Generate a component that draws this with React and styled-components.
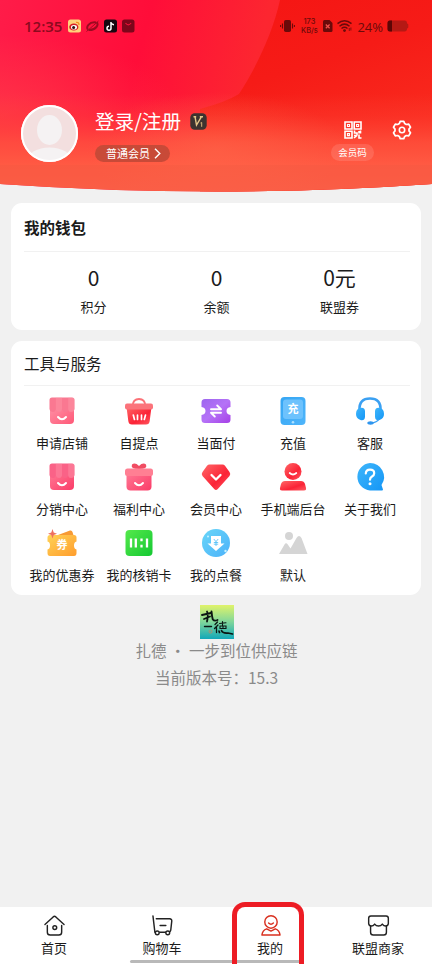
import React from "react";
import styled, { createGlobalStyle } from "styled-components";

const GlobalStyle = createGlobalStyle`
  * {
    box-sizing: border-box;
  }
  body {
    margin: 0;
    background-color: #f1f1f1;
    font-family: "Noto Sans CJK SC", sans-serif;
    color: #1b1b1b;
  }
`;

function HeaderArt() {
  return (
    <Art viewBox="0 0 432 192" preserveAspectRatio="none">
      <defs>
        <linearGradient id="base" x1="0" y1="0" x2="1" y2="0.12">
          <stop offset="0" stopColor="#ff1c49" />
          <stop offset="0.35" stopColor="#ff0d39" />
          <stop offset="0.62" stopColor="#fc2630" />
          <stop offset="1" stopColor="#f8221a" />
        </linearGradient>
        <linearGradient id="right" x1="0" y1="0" x2="0.4" y2="1">
          <stop offset="0" stopColor="#f51513" />
          <stop offset="0.45" stopColor="#f61b17" />
          <stop offset="1" stopColor="#fa2f20" />
        </linearGradient>
        <linearGradient id="fade" x1="0" y1="0" x2="0" y2="1">
          <stop offset="0.49" stopColor="#ff4b3c" stopOpacity="0" />
          <stop offset="0.6" stopColor="#ff4336" stopOpacity="0.3" />
          <stop offset="0.74" stopColor="#ff523e" stopOpacity="0.8" />
          <stop offset="0.86" stopColor="#ff5a43" />
          <stop offset="1" stopColor="#ff6048" />
        </linearGradient>
        <radialGradient id="side" cx="0" cy="0.6" r="0.42">
          <stop offset="0" stopColor="#ff4a48" stopOpacity="0.55" />
          <stop offset="1" stopColor="#ff4a48" stopOpacity="0" />
        </radialGradient>
        <radialGradient id="glow" cx="0.5" cy="0.78" r="0.3">
          <stop offset="0" stopColor="#ff6a4c" stopOpacity="0.5" />
          <stop offset="1" stopColor="#ff6a4c" stopOpacity="0" />
        </radialGradient>
        <clipPath id="curve">
          <path d="M0 0H432V184Q324 191.500 216 191.500Q108 191.500 0 184Z" />
        </clipPath>
      </defs>
      <g clipPath="url(#curve)">
        <path d="M0 0H432V192H0Z" fill="url(#base)" />
        <path
          d="M280 0C273 32 257 66 239 94Q226 102 200 109V192H432V0Z"
          fill="url(#right)"
        />
        <path d="M0 0H432V192H0Z" fill="url(#side)" />
        <path d="M0 0H432V192H0Z" fill="url(#fade)" />
        <path d="M0 0H432V192H0Z" fill="url(#glow)" />
        <path d="M0 165H432V192H0Z" fill="#e8573e" opacity="0.22" />
      </g>
    </Art>
  );
}

function StatusIcons() {
  return (
    <svg width="67" height="14" viewBox="0 0 67 14">
      <rect x="0" y="0.500" width="13" height="13" rx="2.500" fill="#ffd27a" />
      <ellipse cx="5.800" cy="8" rx="4.600" ry="3.600" fill="#d81f26" />
      <ellipse cx="6" cy="8.200" rx="3" ry="2.300" fill="#fff" />
      <circle cx="5.600" cy="8.400" r="1.500" fill="#2b1210" />
      <path
        d="M8 3.400q3-.6 3 2.600"
        fill="none"
        stroke="#f58a1f"
        strokeWidth="1.200"
      />
      <path
        d="M20 10.500C17.500 8.500 21 2.500 28 3.500M28.500 3.500C31.500 5 28 11.500 20.500 11"
        fill="none"
        stroke="#9a0a20"
        strokeWidth="2"
      />
      <path d="M18.500 12.500L30.500 2" stroke="#9a0a20" strokeWidth="0.900" />
      <rect x="36" y="0.500" width="13" height="13" rx="2.500" fill="#170710" />
      <path
        d="M43 3v6.200a2 2 0 1 1-2-2M43 3q.4 2.500 3 2.700"
        fill="none"
        stroke="#fff"
        strokeWidth="1.500"
      />
      <rect x="54" y="0.500" width="12.500" height="13" rx="2.500" fill="#7d061b" />
      <path
        d="M57.500 4q2.800 3.600 5.600 0"
        fill="none"
        stroke="#ef1238"
        strokeWidth="1.200"
      />
    </svg>
  );
}

function VibrateIcon() {
  return (
    <svg width="15" height="14" viewBox="0 0 15 14">
      <rect x="4" y="1" width="7" height="12" rx="1.800" fill="#6b0a0a" />
      <path
        d="M2.500 4.500v5M12.500 4.500v5M.6 6v2M14.400 6v2"
        stroke="#6b0a0a"
        strokeWidth="1.100"
      />
    </svg>
  );
}

function SignalIcons() {
  return (
    <svg width="30" height="14" viewBox="0 0 30 14">
      <path
        d="M2.500 1H7.500L10.500 4V11.500Q10.500 13 9 13H2.500Q1 13 1 11.500V2.500Q1 1 2.500 1Z"
        fill="#6b0a0a"
      />
      <path d="M3.800 5.500l3.800 3.800M7.600 5.500L3.800 9.300" stroke="#f0504a" strokeWidth="1.300" />
      <g fill="none" stroke="#6b0a0a" strokeWidth="1.500">
        <path d="M15.500 4.700Q22.500-1 29.500 4.700" />
        <path d="M17.500 7.200Q22.500 3 27.500 7.200" />
        <path d="M19.500 9.500Q22.500 7.200 25.500 9.500" />
      </g>
      <circle cx="22.500" cy="11.600" r="1.400" fill="#6b0a0a" />
      <path d="M27.300 9v3M28.900 8.500v3" stroke="#6b0a0a" strokeWidth="0.800" />
    </svg>
  );
}

function BatteryIcon() {
  return (
    <svg width="22" height="12" viewBox="0 0 22 12">
      <path
        d="M3 .5H17.500Q20 .5 20 3.200L21.300 4.500V7.500L20 8.800Q20 11.500 17.500 11.500H3Q.5 11.500 .5 9V3Q.5 .5 3 .5Z"
        fill="#b51914"
      />
      <path d="M3 .5H5V11.500H3Q.5 11.500 .5 9V3Q.5 .5 3 .5Z" fill="#5c0606" />
    </svg>
  );
}

function AvatarIcon() {
  return (
    <svg width="57" height="57" viewBox="0 0 57 57">
      <defs>
        <clipPath id="face">
          <circle cx="28.500" cy="28.500" r="27" />
        </clipPath>
      </defs>
      <circle cx="28.500" cy="28.500" r="28.500" fill="#fff" />
      <circle cx="28.500" cy="28.500" r="27" fill="#f3dfdf" />
      <g clipPath="url(#face)" fill="#f5f2f3">
        <ellipse cx="28.500" cy="25" rx="12.500" ry="15" />
        <ellipse cx="28.500" cy="55" rx="22" ry="12.500" />
      </g>
      <circle
        cx="28.500"
        cy="28.500"
        r="27.500"
        fill="none"
        stroke="#fff"
        strokeWidth="2"
      />
    </svg>
  );
}

function LevelBadge() {
  return (
    <svg width="17" height="17" viewBox="0 0 17 17">
      <rect x="0.300" y="0.300" width="16.400" height="16.400" rx="4.500" fill="#3c3330" />
      <path
        d="M3.500 3.700H6.200M5 3.700L6.500 12L11.500 3.700M9.800 3.700H13"
        fill="none"
        stroke="#e4c689"
        strokeWidth="1.400"
      />
      <path d="M10.500 10L11.700 9.500V13.800" fill="none" stroke="#d9b87c" />
    </svg>
  );
}

function QrIcon() {
  return (
    <svg width="18" height="18" viewBox="0 0 18 18">
      <g fill="none" stroke="#fff" strokeWidth="1.600">
        <path d="M1 1H8V8H1ZM10.200 1H17V8H10.200ZM1 10.200H8V17H1Z" />
        <path d="M3.500 3.500h2v2h-2zM12.600 3.500h2v2h-2zM3.500 12.600h2v2h-2z" strokeWidth="1.100" />
        <path d="M10.500 9.500V12H13V14.500M16.500 9.500V12.500M15 10V12.500M10 17L13 14.500M15 13.500V17H17.500M10 14.500H12" />
      </g>
    </svg>
  );
}

function GearIcon() {
  return (
    <svg width="20" height="20" viewBox="0 0 20 20" fill="none" stroke="#fff">
      <path
        d="M8.200 1.400H11.800L12.700 3.600L14.300 4.500L16.700 4.100L18.500 7.200L17 9.100V10.900L18.500 12.800L16.700 15.900L14.300 15.500L12.700 16.400L11.800 18.600H8.200L7.300 16.400L5.700 15.500L3.300 15.900L1.500 12.800L3 10.900V9.100L1.500 7.200L3.300 4.100L5.700 4.500L7.300 3.600Z"
        strokeWidth="1.700"
        strokeLinejoin="round"
      />
      <circle cx="10" cy="10" r="2.700" strokeWidth="1.600" />
    </svg>
  );
}

function ToolDefs() {
  return (
    <HiddenSvg>
      <defs>
        <linearGradient id="pink" x1="0" y1="0" x2="1" y2="1">
          <stop offset="0" stopColor="#ff93a8" />
          <stop offset="1" stopColor="#ff5877" />
        </linearGradient>
        <linearGradient id="pinkDeep" x1="0" y1="0" x2="1" y2="1">
          <stop offset="0" stopColor="#ff7b96" />
          <stop offset="1" stopColor="#fb3c68" />
        </linearGradient>
        <linearGradient id="red" x1="0" y1="0" x2="1" y2="1">
          <stop offset="0" stopColor="#ff6868" />
          <stop offset="0.600" stopColor="#fb2336" />
          <stop offset="1" stopColor="#ff5b62" />
        </linearGradient>
        <linearGradient id="purple" x1="0" y1="0" x2="1" y2="1">
          <stop offset="0" stopColor="#9c66ee" />
          <stop offset="0.500" stopColor="#b572f7" />
          <stop offset="1" stopColor="#a63fe6" />
        </linearGradient>
        <linearGradient id="blue" x1="0" y1="0" x2="1" y2="1">
          <stop offset="0" stopColor="#35a6f3" />
          <stop offset="1" stopColor="#4fb5fb" />
        </linearGradient>
        <linearGradient id="azure" x1="0" y1="0" x2="1" y2="1">
          <stop offset="0" stopColor="#3fb6fb" />
          <stop offset="1" stopColor="#1496f6" />
        </linearGradient>
        <linearGradient id="sky" x1="0" y1="0" x2="1" y2="1">
          <stop offset="0" stopColor="#68d6f8" />
          <stop offset="1" stopColor="#4cb2fa" />
        </linearGradient>
        <linearGradient id="gold" x1="0" y1="0" x2="1" y2="1">
          <stop offset="0" stopColor="#ffd256" />
          <stop offset="1" stopColor="#ff9d2d" />
        </linearGradient>
        <linearGradient id="green" x1="0" y1="0" x2="1" y2="1">
          <stop offset="0" stopColor="#55e94c" />
          <stop offset="1" stopColor="#14c832" />
        </linearGradient>
      </defs>
    </HiddenSvg>
  );
}

function Smile({ y = 20 }) {
  return (
    <path
      d={`M10 ${y}Q14 ${y + 4.4} 18 ${y}`}
      fill="none"
      stroke="#fff"
      strokeWidth="2"
      strokeLinecap="round"
    />
  );
}

function ShopIcon({ deep }) {
  return (
    <ToolSvg viewBox="0 0 28 28">
      <rect
        x="2"
        y="8"
        width="24"
        height="19"
        rx="4"
        fill={deep ? "url(#pinkDeep)" : "url(#pink)"}
      />
      <path
        d="M4 .5H24Q26.500 .5 26.500 3V12Q26 15 23 15Q20.500 15 20.200 12.500Q19.500 15 17 15Q14.500 15 14 12.500Q13.500 15 11 15Q8.500 15 7.800 12.500Q7.500 15 5 15Q2 15 1.500 12V3Q1.500 .5 4 .5Z"
        fill={deep ? "#fa6287" : "#fa7891"}
      />
      <path
        d="M7.800 .5H14V12.500Q13.500 15 11 15Q8.500 15 7.800 12.500ZM20.200 .5H24Q26.500 .5 26.500 3V12Q26 15 23 15Q20.500 15 20.200 12.500Z"
        fill="#ffa0b0"
        opacity="0.350"
      />
      <Smile />
    </ToolSvg>
  );
}

function BasketIcon() {
  return (
    <ToolSvg viewBox="0 0 28 28">
      <path
        d="M7.500 9Q8 2 14 2Q20 2 20.500 9"
        fill="none"
        stroke="#fb7177"
        strokeWidth="1.800"
      />
      <path d="M1.500 10H26.500L24.700 24Q24.300 27.500 21 27.500H7Q3.700 27.500 3.300 24Z" fill="url(#red)" />
      <rect x="0" y="6.500" width="28" height="6" rx="2" fill="#fb737b" />
      <path
        d="M8.300 18L9.500 22.500M12.500 18V22.500M16.500 18V22.500M20.500 18L19.300 22.500"
        stroke="#fff"
        strokeWidth="1.700"
        strokeLinecap="round"
      />
    </ToolSvg>
  );
}

function TransferIcon() {
  return (
    <ToolSvg viewBox="0 0 28 28">
      <path
        d="M3 2H25Q28.500 2 28.500 5.500V10Q24.500 10.500 24.500 14Q24.500 17.500 28.500 18V22.500Q28.500 26 25 26H3Q-.5 26 -.5 22.500V18Q3.500 17.500 3.500 14Q3.500 10.500 -.5 10V5.500Q-.5 2 3 2Z"
        fill="url(#purple)"
      />
      <path
        d="M9 12.200H19L15.200 8.500M19 15.800H9L12.800 19.500"
        fill="none"
        stroke="#fff"
        strokeWidth="1.900"
        strokeLinecap="round"
        strokeLinejoin="round"
      />
    </ToolSvg>
  );
}

function RechargeIcon() {
  return (
    <ToolSvg viewBox="0 0 28 28">
      <rect x="1.500" y="0" width="25" height="28" rx="4" fill="url(#blue)" />
      <rect x="4" y="2.500" width="20" height="19.500" rx="3" fill="#6dc2fd" />
      <circle cx="14" cy="25.200" r="1.300" fill="#aee0ff" />
      <text x="14" y="16.300" fontSize="11" fontWeight="700" fill="#fff" textAnchor="middle">
        充
      </text>
    </ToolSvg>
  );
}

function HeadsetIcon() {
  return (
    <ToolSvg viewBox="0 0 28 28">
      <path
        d="M3.500 13Q3 1.500 14 1.500Q25 1.500 24.500 13"
        fill="none"
        stroke="#3ba0f2"
        strokeWidth="2.600"
      />
      <path d="M4 11Q8.500 10 9 14V20Q8.500 24 4.500 23Q0 21.500 0 17Q0 12 4 11Z" fill="url(#azure)" />
      <path d="M24 11Q19.500 10 19 14V20Q19.500 24 23.500 23Q28 21.500 28 17Q28 12 24 11Z" fill="url(#azure)" />
      <path d="M23 22Q21 25.500 15 26" fill="none" stroke="#38a0f4" strokeWidth="1.500" />
      <ellipse cx="14.500" cy="26" rx="3.200" ry="1.700" fill="#2e95ee" />
    </ToolSvg>
  );
}

function GiftIcon() {
  return (
    <ToolSvg viewBox="0 0 28 28">
      <path d="M14 6Q5 6 7 1.500Q10-1 14 3Q18-1 21 1.500Q23 6 14 6Z" fill="#f04c62" />
      <rect x="1.500" y="8" width="25" height="19.500" rx="4" fill="url(#pinkDeep)" />
      <rect x="0" y="5.500" width="28" height="7.500" rx="2.500" fill="#ff7f93" />
      <Smile />
    </ToolSvg>
  );
}

function DiamondIcon() {
  return (
    <ToolSvg viewBox="0 0 28 28">
      <path
        d="M7.500 1.500H20.500Q22 1.500 23 2.700L27.500 9Q29 11 27.500 13L15.800 26Q14 28 12.200 26L.5 13Q-1 11 .5 9L5 2.700Q6 1.500 7.500 1.500Z"
        fill="url(#red)"
      />
      <path
        d="M9.500 12L14 16.500L18.500 12"
        fill="none"
        stroke="#fff"
        strokeWidth="2.300"
        strokeLinecap="round"
        strokeLinejoin="round"
      />
    </ToolSvg>
  );
}

function AdminIcon() {
  return (
    <ToolSvg viewBox="0 0 28 28">
      <circle cx="14" cy="8.500" r="8.500" fill="url(#red)" />
      <path
        d="M10.700 10Q14 13 17.300 10"
        fill="none"
        stroke="#fff"
        strokeWidth="1.800"
        strokeLinecap="round"
      />
      <path
        d="M6 18H22Q25 18 26 21L27 25Q27.500 27.500 25 27.500H3Q.5 27.500 1 25L2 21Q3 18 6 18Z"
        fill="url(#red)"
      />
    </ToolSvg>
  );
}

function AboutIcon() {
  return (
    <ToolSvg viewBox="0 0 28 28">
      <path
        d="M14 0A14 14 0 0 1 25.500 22L27 26.500Q27 27.500 26 27.500H14A13.800 13.800 0 0 1 14 0Z"
        fill="url(#azure)"
      />
      <path
        d="M9.800 10.500Q10 6.700 14 6.700Q18.200 6.700 18.200 10.200Q18.200 12.300 16 13.500Q14 14.700 14 16.700"
        fill="none"
        stroke="#fff"
        strokeWidth="2.200"
        strokeLinecap="round"
      />
      <circle cx="14" cy="20.800" r="1.500" fill="#fff" />
    </ToolSvg>
  );
}

function CouponIcon() {
  return (
    <ToolSvg viewBox="0 0 28 28">
      <path d="M10 6L22 1.500Q24 1 24.500 3L26 8H8Z" fill="#f79a34" />
      <path
        d="M2 6H26Q28.500 6 28.500 8.500V12.500Q26 13 26 16.500Q26 20 28.500 20.500V24Q28.500 27 26 27H2Q-.5 27 -.5 24V20.500Q2 20 2 16.500Q2 13 -.5 12.500V8.500Q-.5 6 2 6Z"
        fill="url(#gold)"
      />
      <path d="M4.500 0L5.700 3.500L9 4.700L5.700 6L4.500 9.500L3.300 6L0 4.700L3.300 3.500Z" fill="#ee705e" />
      <text x="14" y="20.300" fontSize="11" fontWeight="700" fill="#fff" textAnchor="middle">
        券
      </text>
    </ToolSvg>
  );
}

function CardIcon() {
  return (
    <ToolSvg viewBox="0 0 28 28">
      <rect x="0.500" y="1" width="27" height="26" rx="4" fill="url(#green)" />
      <path
        d="M6 9.500V18.500M10.800 9.500V18.500M16.500 9.500V12.300M16.500 15.700V18.500M22 9.500V18.500"
        stroke="#fff"
        strokeWidth="2.300"
      />
    </ToolSvg>
  );
}

function OrderIcon() {
  return (
    <ToolSvg viewBox="0 0 28 28">
      <circle cx="14" cy="14" r="14" fill="url(#sky)" />
      <path d="M9 7H19V14.500H22.500L14 22L5.500 14.500H9Z" fill="#fff" />
      <path
        d="M11.800 10L14 12.700L16.200 10M14 12.700V17M11.800 13.500H16.200M11.800 15.200H16.200"
        fill="none"
        stroke="#48bdf8"
        strokeWidth="0.800"
      />
      <circle cx="6" cy="7.500" r="1" fill="#c9f2ff" />
      <circle cx="23.500" cy="22" r="1.200" fill="#c9f2ff" />
    </ToolSvg>
  );
}

function DefaultIcon() {
  return (
    <ToolSvg viewBox="0 0 28 28">
      <circle cx="10" cy="7" r="4" fill="#d5d5d5" />
      <path
        d="M0 25L5.500 15.500Q7 13 8.800 15.500L11.500 19.500L17.500 9Q20 5 22.500 9L28.500 25Z"
        fill="#d5d5d5"
      />
    </ToolSvg>
  );
}

function LogoMark() {
  return (
    <svg width="34" height="34" viewBox="0 0 34 34">
      <defs>
        <linearGradient id="logo" x1="0" y1="0" x2="0" y2="1">
          <stop offset="0" stopColor="#e0f36a" />
          <stop offset="0.500" stopColor="#7fd69b" />
          <stop offset="1" stopColor="#12a8b8" />
        </linearGradient>
      </defs>
      <path d="M0 0H34V34H0Z" fill="url(#logo)" />
      <g fill="none" stroke="#0b1512" strokeLinecap="round">
        <path d="M2 10L11 8M7 6.500Q8.500 10 7 16.500M4 14L10 11.500" strokeWidth="1.800" />
        <path d="M11.500 6.500Q12 12 12.800 14.500Q14.500 16.500 17.500 15" strokeWidth="1.900" />
        <path d="M4.500 21.500H11.500" strokeWidth="1.400" />
        <path d="M17.500 17L15 19.500M18 20L14.500 23.500M16.500 22.500V27.500" strokeWidth="1.300" />
        <path d="M19.500 18.500L26 17.700M22.500 16.500V20M20 21H26V23.500H20V21M23 21V23.500" strokeWidth="1.100" />
        <path d="M19 26L19.500 27.500M21.500 25.500Q22.500 28.500 28 28L32.500 29" strokeWidth="1.700" />
      </g>
      <circle cx="10.500" cy="26.500" r="1.500" fill="none" stroke="#b98a6a" strokeWidth="0.900" />
    </svg>
  );
}

function HomeIcon() {
  return (
    <TabSvg viewBox="0 0 22 22">
      <path d="M1 10L9.600 2Q11 .8 12.400 2L21 10" />
      <path d="M3.500 11V18Q3.500 21 6.500 21H15.500Q18.500 21 18.500 18V11" />
      <circle cx="11.300" cy="13.200" r="2" />
    </TabSvg>
  );
}

function CartIcon() {
  return (
    <TabSvg viewBox="0 0 22 22">
      <path d="M1 1L3 18" />
      <path d="M4.500 4H18.500Q21 4 20.700 6.500L19.700 15.500Q19.500 18 17 18H8" />
      <path d="M8.500 11H14.500" />
      <circle cx="5.500" cy="18.700" r="2" fill="#fff" />
      <circle cx="16.500" cy="18.700" r="2" fill="#fff" />
    </TabSvg>
  );
}

function MineIcon() {
  return (
    <TabSvg viewBox="0 0 22 22" $color="#d9301f">
      <circle cx="11.500" cy="7.300" r="6.500" />
      <path d="M9 8.500Q11.500 11 14 8.500" />
      <path d="M7 14.500Q2.500 16 2 21H21Q20.500 16 16 14.500L11.500 16.800Z" />
    </TabSvg>
  );
}

function StoreIcon() {
  return (
    <TabSvg viewBox="0 0 22 22">
      <path d="M3 1H19Q21.300 1 21.300 3.500V9Q21 11.500 18.500 11.500Q16.500 11.500 15 9.500Q13.500 11.500 11 11.500Q8.500 11.500 7 9.500Q5.500 11.500 3.500 11.500Q1 11.500 .7 9V3.500Q.7 1 3 1Z" />
      <path d="M2.700 11.500V18Q2.700 21 5.500 21H16.500Q19.300 21 19.300 18V11.500" />
    </TabSvg>
  );
}

const wallet = [
  { value: "0", label: "积分" },
  { value: "0", label: "余额" },
  { value: "0元", label: "联盟券" },
];

const tools = [
  { label: "申请店铺", icon: <ShopIcon /> },
  { label: "自提点", icon: <BasketIcon /> },
  { label: "当面付", icon: <TransferIcon /> },
  { label: "充值", icon: <RechargeIcon /> },
  { label: "客服", icon: <HeadsetIcon /> },
  { label: "分销中心", icon: <ShopIcon deep /> },
  { label: "福利中心", icon: <GiftIcon /> },
  { label: "会员中心", icon: <DiamondIcon /> },
  { label: "手机端后台", icon: <AdminIcon /> },
  { label: "关于我们", icon: <AboutIcon /> },
  { label: "我的优惠券", icon: <CouponIcon /> },
  { label: "我的核销卡", icon: <CardIcon /> },
  { label: "我的点餐", icon: <OrderIcon /> },
  { label: "默认", icon: <DefaultIcon /> },
];

const tabs = [
  { label: "首页", icon: <HomeIcon /> },
  { label: "购物车", icon: <CartIcon /> },
  { label: "我的", icon: <MineIcon />, marked: true },
  { label: "联盟商家", icon: <StoreIcon /> },
];

function App() {
  return (
    <Page>
      <GlobalStyle />
      <ToolDefs />
      <Header>
        <HeaderArt />
        <StatusBar>
          <Clock>12:35</Clock>
          <StatusIcons />
          <StatusRight>
            <VibrateIcon />
            <Speed>
              <span>173</span>
              <span>KB/s</span>
            </Speed>
            <SignalIcons />
            <Percent>24%</Percent>
            <BatteryIcon />
          </StatusRight>
        </StatusBar>
        <Profile>
          <AvatarIcon />
          <UserInfo>
            <UserName>
              登录/注册
              <LevelBadge />
            </UserName>
            <MemberPill>
              普通会员
              <svg width="7" height="11" viewBox="0 0 7 11">
                <path d="M1 .7L5.800 5.500L1 10.300" fill="none" stroke="#fff" strokeWidth="1.400" />
              </svg>
            </MemberPill>
          </UserInfo>
          <MemberCode>
            <QrIcon />
            <CodePill>会员码</CodePill>
          </MemberCode>
          <Settings>
            <GearIcon />
          </Settings>
        </Profile>
      </Header>

      <Card $height={127}>
        <CardTitle $weight={700} $height={49}>
          我的钱包
        </CardTitle>
        <WalletRow>
          {wallet.map((item) => (
            <WalletItem key={item.label}>
              <WalletValue>{item.value}</WalletValue>
              <Label>{item.label}</Label>
            </WalletItem>
          ))}
        </WalletRow>
      </Card>

      <Card $height={254}>
        <CardTitle $weight={400} $height={45}>
          工具与服务
        </CardTitle>
        <ToolGrid>
          {tools.map((tool) => (
            <Tool key={tool.label}>
              {tool.icon}
              <Label>{tool.label}</Label>
            </Tool>
          ))}
        </ToolGrid>
      </Card>

      <Footer>
        <LogoMark />
        <FooterLine $height={23}>扎德 • 一步到位供应链</FooterLine>
        <FooterLine $height={31}>当前版本号：15.3</FooterLine>
      </Footer>

      <TabBar>
        {tabs.map((tab) => (
          <Tab key={tab.label}>
            {tab.icon}
            <Label>{tab.label}</Label>
            {tab.marked && <Marker />}
          </Tab>
        ))}
        <HomeIndicator />
      </TabBar>
    </Page>
  );
}

const Page = styled.div`
  width: 432px;
  height: 964px;
  display: flex;
  flex-direction: column;
  overflow: hidden;
  background-color: #f1f1f1;
  svg {
    display: block;
    flex-shrink: 0;
  }
`;

const HiddenSvg = styled.svg`
  position: absolute;
  width: 0;
  height: 0;
`;

const Header = styled.header`
  position: relative;
  height: 192px;
  flex-shrink: 0;
`;

const Art = styled.svg`
  position: absolute;
  inset: 0;
  width: 100%;
  height: 100%;
`;

const StatusBar = styled.div`
  position: relative;
  display: flex;
  align-items: center;
  height: 52px;
  padding: 0 23px 0 24px;
  font-family: "Open Sans", "Noto Sans", sans-serif;
  color: #6b0a0a;
`;

const Clock = styled.span`
  width: 44px;
  font-size: 15px;
  font-weight: 600;
  line-height: 20px;
  color: #8b0a1e;
`;

const StatusRight = styled.div`
  display: flex;
  align-items: center;
  margin-left: auto;
`;

const Speed = styled.div`
  display: flex;
  flex-direction: column;
  align-items: center;
  width: 20px;
  margin: 0 3px 0 4px;
  font-family: Inter, sans-serif;
  font-size: 7.4px;
  font-weight: 500;
  line-height: 9px;
  white-space: nowrap;
`;

const Percent = styled.span`
  margin: 2px 4px 0 5px;
  font-size: 13px;
  font-weight: 500;
  line-height: 18px;
`;

const Profile = styled.div`
  position: relative;
  display: flex;
  align-items: flex-start;
  padding: 53px 20px 0 21px;
`;

const UserInfo = styled.div`
  margin: 3px 0 0 17px;
`;

const UserName = styled.div`
  display: flex;
  align-items: center;
  gap: 9px;
  height: 26px;
  font-size: 19.6px;
  line-height: 26px;
  color: #fff;
`;

const MemberPill = styled.div`
  display: flex;
  align-items: center;
  gap: 4px;
  width: 75px;
  height: 17px;
  margin-top: 11px;
  padding-left: 11px;
  border-radius: 9px;
  background-color: #c84a38;
  font-size: 11px;
  line-height: 17px;
  color: #fff;
`;

const MemberCode = styled.div`
  display: flex;
  flex-direction: column;
  align-items: center;
  gap: 5px;
  margin: 16px 18px 0 auto;
`;

const CodePill = styled.div`
  width: 43px;
  height: 17px;
  border-radius: 9px;
  background-color: rgba(255, 255, 255, 0.12);
  font-size: 9.5px;
  line-height: 17px;
  text-align: center;
  color: #fff;
`;

const Settings = styled.div`
  margin-top: 15px;
`;

const Card = styled.section`
  height: ${(props) => props.$height}px;
  flex-shrink: 0;
  margin: 11px 11px 0;
  padding: 0 11px 0 13px;
  border-radius: 11px;
  background-color: #fff;
`;

const CardTitle = styled.h2`
  height: ${(props) => props.$height}px;
  margin: 0;
  border-bottom: 1.5px solid #f1f1f1;
  font-size: 15.5px;
  font-weight: ${(props) => props.$weight};
  line-height: ${(props) => props.$height - 1}px;
`;

const WalletRow = styled.div`
  display: grid;
  grid-template-columns: repeat(3, 123px);
  padding: 9px 0 0 8px;
`;

const WalletItem = styled.div`
  display: flex;
  flex-direction: column;
  align-items: center;
`;

const WalletValue = styled.span`
  height: 36px;
  font-size: 21px;
  line-height: 32px;
`;

const Label = styled.span`
  font-size: 13px;
  line-height: 20px;
  white-space: nowrap;
`;

const ToolGrid = styled.div`
  display: grid;
  grid-template-columns: repeat(5, 77px);
  grid-auto-rows: 66px;
  margin-left: -0.5px;
  padding-top: 11px;
`;

const Tool = styled.div`
  display: flex;
  flex-direction: column;
  align-items: center;
  gap: 8px;
`;

const ToolSvg = styled.svg`
  width: 28px;
  height: 28px;
  overflow: visible;
`;

const Footer = styled.footer`
  display: flex;
  flex-direction: column;
  align-items: center;
  padding: 10px 0 0 1px;
`;

const FooterLine = styled.p`
  margin: 0;
  font-size: 15.5px;
  line-height: ${(props) => props.$height}px;
  color: #8a8a8a;
`;

const TabBar = styled.nav`
  position: relative;
  display: grid;
  grid-template-columns: repeat(4, 108px);
  height: 57px;
  flex-shrink: 0;
  margin-top: auto;
  background-color: #fff;
`;

const Tab = styled.div`
  position: relative;
  display: flex;
  flex-direction: column;
  align-items: center;
  gap: 2px;
  padding-top: 8px;
`;

const TabSvg = styled.svg`
  width: 21px;
  height: 21px;
  overflow: visible;
  fill: none;
  stroke: ${(props) => props.$color || "#222"};
  stroke-width: 1.5;
  stroke-linecap: round;
  stroke-linejoin: round;
`;

const Marker = styled.div`
  position: absolute;
  z-index: 1;
  left: 16px;
  top: -5px;
  width: 72px;
  height: 66px;
  border: 5px solid #ed1c24;
  border-bottom: none;
  border-radius: 13px 13px 0 0;
`;

const HomeIndicator = styled.div`
  position: absolute;
  left: 130px;
  bottom: 1px;
  width: 172px;
  height: 3px;
  border-radius: 2px;
  background-color: #b9b9b9;
`;

export default App;
